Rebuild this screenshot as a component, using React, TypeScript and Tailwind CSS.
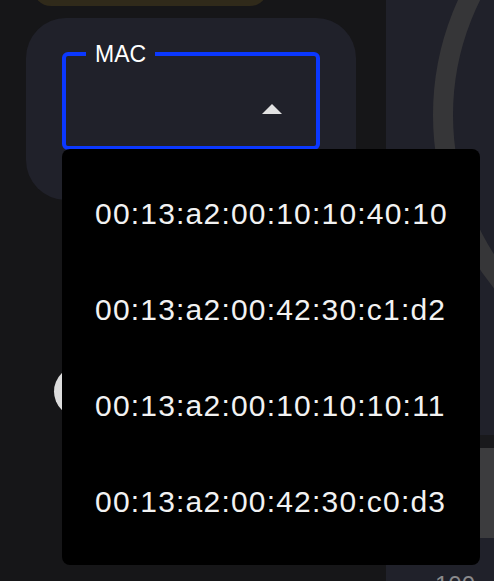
import React from 'react';

const macs = [
  '00:13:a2:00:10:10:40:10',
  '00:13:a2:00:42:30:c1:d2',
  '00:13:a2:00:10:10:10:11',
  '00:13:a2:00:42:30:c0:d3',
];

const App: React.FC = () => {
  return (
    <div
      className="relative w-[494px] h-[581px] overflow-hidden flex bg-[#161618]"
      style={{ fontFamily: '"Liberation Sans", Arial, sans-serif' }}
    >
      {/* left column */}
      <div className="w-[386px] shrink-0 flex flex-col">
        <div className="h-[40px] -mt-[34px] ml-[33px] w-[235px] rounded-b-[18px] bg-[#302a1a] shrink-0" />

        <div className="mt-[12px] ml-[26px] w-[330px] h-[182px] shrink-0 rounded-[40px] bg-[#20212a] pl-[36px] pt-[24px]">
          <fieldset className="w-[258px] h-[108px] rounded-md border-[4px] border-[#0b38ff] px-0 m-0 min-w-0">
            <legend className="ml-[20px] px-[9px] text-[23px] leading-[24px] text-white">MAC</legend>
            <div className="flex justify-end pr-[34px] pt-[38px]">
              <svg width="20" height="10" viewBox="0 0 20 10">
                <path d="M0 10 L10 0 L20 10 Z" fill="#e2e2e2" />
              </svg>
            </div>
          </fieldset>
        </div>

        <div className="mt-[166px] ml-[54px] w-[220px] h-[51px] shrink-0 rounded-full bg-gradient-to-r from-[#dcdcdc] to-[#f4f4f4]" />
      </div>

      {/* right column */}
      <div className="relative flex-1 bg-[#20212a] flex flex-col">
        <svg className="absolute left-0 top-0" width="108" height="440" viewBox="0 0 108 440">
          <circle cx="324" cy="115" r="267" fill="none" stroke="#363638" strokeWidth="20" />
        </svg>
        <div className="mt-[435px] h-[13px] shrink-0 bg-[#19191c]" />
        <div className="h-[90px] shrink-0 bg-[#3c3c3e]" />
        <div className="shrink-0 pt-[35px] pl-[49px] text-[24px] leading-none text-[#8a8a8c]">100</div>
      </div>

      {/* open menu */}
      <div className="absolute left-[62px] top-[149px] w-[418px] h-[416px] bg-black rounded-lg py-4">
        {macs.map((m) => (
          <div key={m} className="h-[96px] flex items-center pl-[33px] text-[30px] tracking-[1.2px] text-[#f2f2f2]">
            {m}
          </div>
        ))}
      </div>
    </div>
  );
};

export default App;
